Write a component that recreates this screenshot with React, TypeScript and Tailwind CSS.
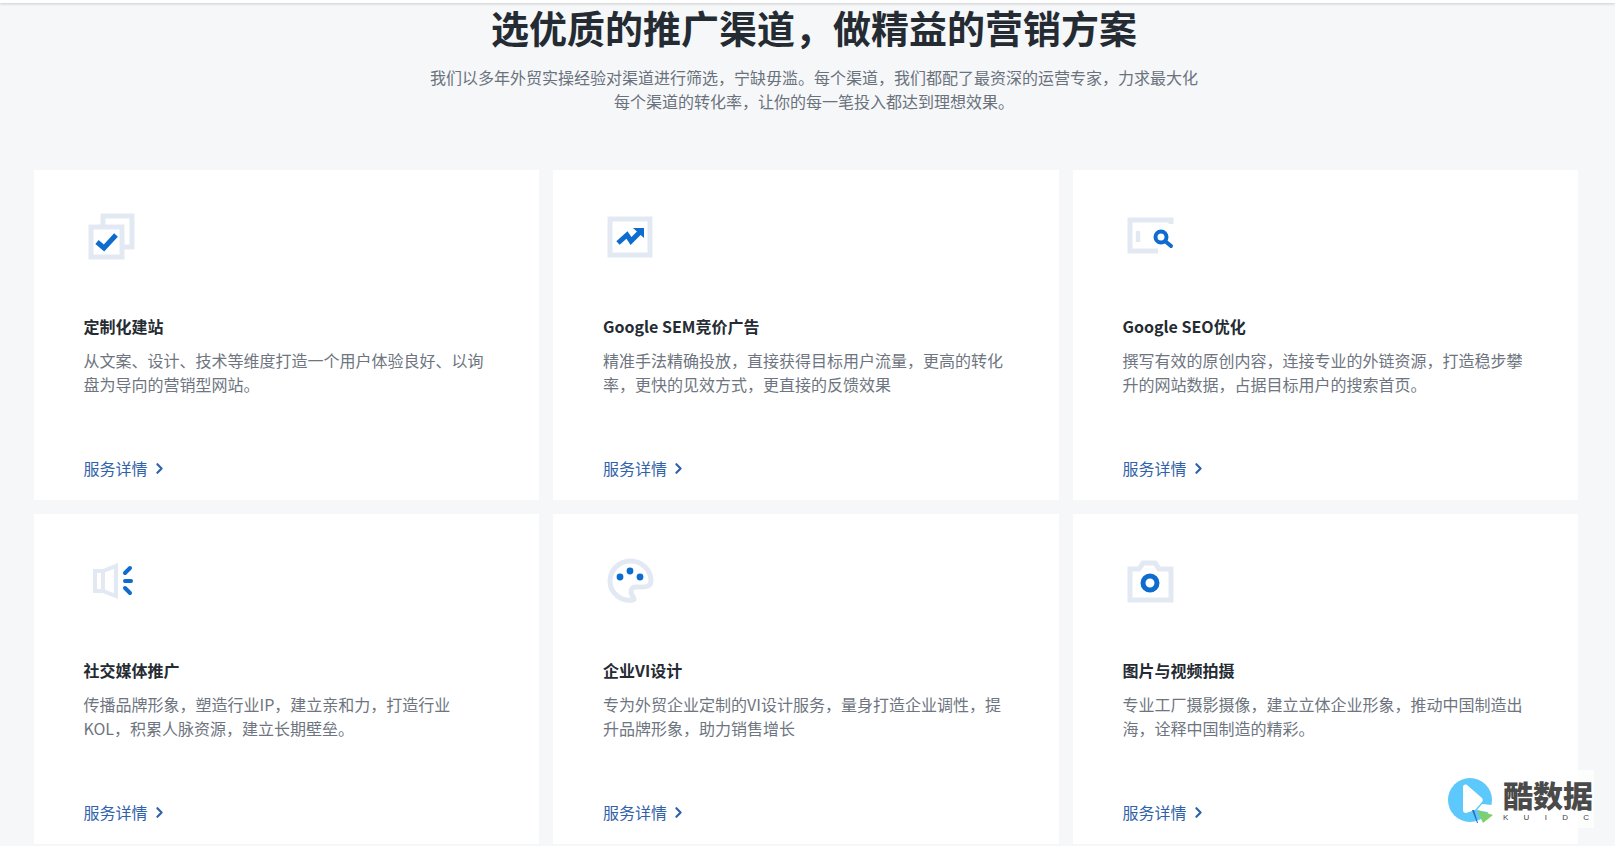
import React from "react";
import { ChevronRight } from "lucide-react";

const PALE = "#e3e9f3";
const BLUE = "#0f6ccf";

const IconSites = () => (
  <svg width="52" height="52" viewBox="0 0 52 52" fill="none">
    <path d="M19 13V4h29v31h-9" stroke={PALE} strokeWidth="5" />
    <rect x="7" y="15" width="31" height="30" stroke={PALE} strokeWidth="5" />
    <path d="M13 30l7 6 12-13" stroke={BLUE} strokeWidth="5" />
  </svg>
);

const IconSem = () => (
  <svg width="52" height="52" viewBox="0 0 52 52" fill="none">
    <rect x="7" y="7" width="40" height="36" stroke={PALE} strokeWidth="5" />
    <path d="M15 31l9-8 4 6 10-10" stroke={BLUE} strokeWidth="5" />
    <path d="M30 16h11v10z" fill={BLUE} />
  </svg>
);

const IconSeo = () => (
  <svg width="52" height="52" viewBox="0 0 52 52" fill="none">
    <path d="M48 12V8H7v31h28" stroke={PALE} strokeWidth="5" />
    <path d="M15 19v11" stroke={PALE} strokeWidth="4.5" />
    <circle cx="38" cy="25" r="5.5" stroke={BLUE} strokeWidth="4" />
    <path d="M42 29l6 5" stroke={BLUE} strokeWidth="4" strokeLinecap="round" />
  </svg>
);

const IconSocial = () => (
  <svg width="52" height="52" viewBox="0 0 52 52" fill="none">
    <path d="M11 15h8l13-5v30l-13-5h-8zM19 15v20" stroke={PALE} strokeWidth="4" />
    <path d="M41 17l5-5M41 25h6M41 32l5 5" stroke={BLUE} strokeWidth="4" strokeLinecap="round" />
  </svg>
);

const IconPalette = () => (
  <svg width="52" height="52" viewBox="0 0 52 52" fill="none">
    <path
      d="M30 44C18 46 7 37 7 25 7 14 16 5 27.5 5 39 5 48 14 48 25c0 5-4 6-10 6h-5c-5 0-6 5-4 8 2 3 3 5 1 5z"
      stroke={PALE}
      strokeWidth="5"
    />
    <circle cx="17" cy="21" r="3.4" fill={BLUE} />
    <circle cx="27" cy="15" r="3.4" fill={BLUE} />
    <circle cx="37" cy="21" r="3.4" fill={BLUE} />
  </svg>
);

const IconCamera = () => (
  <svg width="52" height="52" viewBox="0 0 52 52" fill="none">
    <path d="M7 13h9l4-6h12l4 6h12v31H7z" stroke={PALE} strokeWidth="5" />
    <circle cx="27" cy="27" r="7" stroke={BLUE} strokeWidth="5" />
  </svg>
);

const services = [
  {
    icon: <IconSites />,
    title: "定制化建站",
    lines: ["从文案、设计、技术等维度打造一个用户体验良好、以询", "盘为导向的营销型网站。"],
  },
  {
    icon: <IconSem />,
    title: "Google SEM竞价广告",
    lines: ["精准手法精确投放，直接获得目标用户流量，更高的转化", "率，更快的见效方式，更直接的反馈效果"],
  },
  {
    icon: <IconSeo />,
    title: "Google SEO优化",
    lines: ["撰写有效的原创内容，连接专业的外链资源，打造稳步攀", "升的网站数据，占据目标用户的搜索首页。"],
  },
  {
    icon: <IconSocial />,
    title: "社交媒体推广",
    lines: ["传播品牌形象，塑造行业IP，建立亲和力，打造行业", "KOL，积累人脉资源，建立长期壁垒。"],
  },
  {
    icon: <IconPalette />,
    title: "企业VI设计",
    lines: ["专为外贸企业定制的VI设计服务，量身打造企业调性，提", "升品牌形象，助力销售增长"],
  },
  {
    icon: <IconCamera />,
    title: "图片与视频拍摄",
    lines: ["专业工厂摄影摄像，建立立体企业形象，推动中国制造出", "海，诠释中国制造的精彩。"],
  },
];

const Watermark = () => (
  <div className="absolute left-[1444px] top-[770px] flex h-[58px] w-[150px] items-start bg-white/70">
    <svg width="50" height="50" viewBox="0 0 50 50" fill="none" className="mt-[5px] shrink-0">
      <circle cx="26" cy="25" r="22" fill="#5cc8fb" />
      <path d="M38 29l10 1v8l-15-3z" fill="#fff" />
      <path d="M19 12c0-2 2-3 4-2l15 13c1 1 1 3 0 4l-7 8-9 3c-2 0-3-1-3-3z" fill="#fff" />
      <path d="M33 35l16 5-10 8z" fill="#7ed06a" />
      <path d="M28 35h2l4 13h-1z" fill="#2f6db5" />
    </svg>
    <div className="mt-[9px] ml-[9px]">
      <div className="text-[30px] leading-[30px] font-black whitespace-nowrap text-[#4a4a4a]">酷数据</div>
      <div className="mt-1 flex justify-between pr-1 font-['Liberation_Sans',sans-serif] text-[8px] leading-[10px] text-[#444]">
        <span>K</span>
        <span>U</span>
        <span>I</span>
        <span>D</span>
        <span>C</span>
      </div>
    </div>
  </div>
);

export default function App() {
  return (
    <div className="relative h-[846px] overflow-hidden bg-[#f5f7f9] font-['Noto_Sans_CJK_SC','Noto_Sans',sans-serif]">
      <div className="h-[3px] bg-white shadow-[0_1px_3px_rgba(0,0,0,0.18)]" />

      <div className="flex flex-col items-center pl-[13px]">
        <h1 className="text-[38px] leading-[48px] font-bold text-[#252b33]">选优质的推广渠道，做精益的营销方案</h1>
        <p className="mt-[14px] text-center text-base leading-6 text-[#6b727c]">
          我们以多年外贸实操经验对渠道进行筛选，宁缺毋滥。每个渠道，我们都配了最资深的运营专家，力求最大化
          <br />
          每个渠道的转化率，让你的每一笔投入都达到理想效果。
        </p>
      </div>

      <div className="mt-[57px] ml-[33.5px] grid w-[1544.5px] grid-cols-3 gap-[14px]">
        {services.map((s) => (
          <div key={s.title} className="flex h-[330px] flex-col bg-white pt-[42px] pb-[20px] pl-[50px]">
            <div className="h-[52px]">{s.icon}</div>
            <h3 className="mt-[50px] text-base leading-6 font-semibold text-[#252b33]">{s.title}</h3>
            <p className="mt-[10px] text-base leading-6 text-[#6e7580]">
              {s.lines[0]}
              <br />
              {s.lines[1]}
            </p>
            <a className="mt-auto flex items-center text-base leading-6 text-[#2f62aa]">
              服务详情
              <ChevronRight size={17} strokeWidth={3} className="ml-[3px]" />
            </a>
          </div>
        ))}
      </div>

      <Watermark />
    </div>
  );
}
